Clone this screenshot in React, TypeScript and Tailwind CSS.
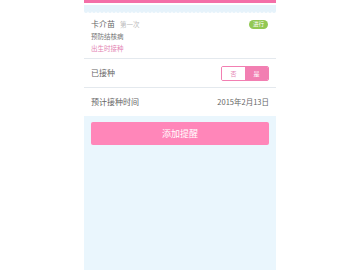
export default function App() {
  const font = { fontFamily: '"Noto Sans CJK SC", "Noto Sans", sans-serif' }
  return (
    <div className="w-[360px] h-[270px] bg-white flex justify-center" style={font}>
      <div className="w-[192px] h-full bg-[#eaf6fd] flex flex-col">
        {/* Top bar */}
        <div className="h-[3px] bg-[#f46fa8]" />
        <div className="h-[11px] bg-white">
          <svg width="192" height="11" viewBox="0 0 192 11" className="block">
            <rect x="0" y="2" width="192" height="6" fill="#e6f3fb" />
            {Array.from({ length: 48 }).map((_, i) => (
              <circle key={i} cx={i * 4 + 2} cy="8" r="2" fill="#e6f3fb" />
            ))}
          </svg>
        </div>

        {/* Vaccine card */}
        <div className="bg-white px-[7px] pt-[4px] pb-[4px] border-b border-[#e4e9ee]">
          <div className="flex items-center justify-between">
            <div className="flex items-baseline gap-[5px]">
              <span className="text-[8px] leading-[12px] text-[#666]">卡介苗</span>
              <span className="text-[6.5px] leading-[12px] text-[#bbb]">第一次</span>
            </div>
            <span className="h-[9px] px-[4px] rounded-full bg-[#92c853] text-white text-[5.5px] leading-[9px] mr-[1px]">进行</span>
          </div>
          <div className="text-[6.5px] leading-[12px] text-[#777]">预防结核病</div>
          <div className="text-[6.5px] leading-[12px] text-[#e383b3]">出生时接种</div>
        </div>

        {/* Vaccinated row */}
        <div className="bg-white h-[29px] px-[7px] flex items-center justify-between border-b border-[#e4e9ee]">
          <span className="text-[8px] text-[#666]">已接种</span>
          <div className="flex h-[15px] w-[48px] rounded-[2px] border border-[#f27fb2] overflow-hidden">
            <span className="flex-1 bg-white text-[#e58ab6] text-[6px] flex items-center justify-center">否</span>
            <span className="flex-1 bg-[#f27fb2] text-white text-[6px] flex items-center justify-center">是</span>
          </div>
        </div>

        {/* Date row */}
        <div className="bg-white h-[28px] px-[7px] flex items-center justify-between">
          <span className="text-[8px] text-[#666]">预计接种时间</span>
          <span className="text-[7.5px] text-[#666]">2015年2月13日</span>
        </div>

        {/* Button */}
        <div className="px-[7px] pt-[6px]">
          <button className="w-full h-[23px] rounded-[2px] bg-[#ff86b9] text-white text-[9px] flex items-center justify-center">
            添加提醒
          </button>
        </div>
      </div>
    </div>
  )
}
